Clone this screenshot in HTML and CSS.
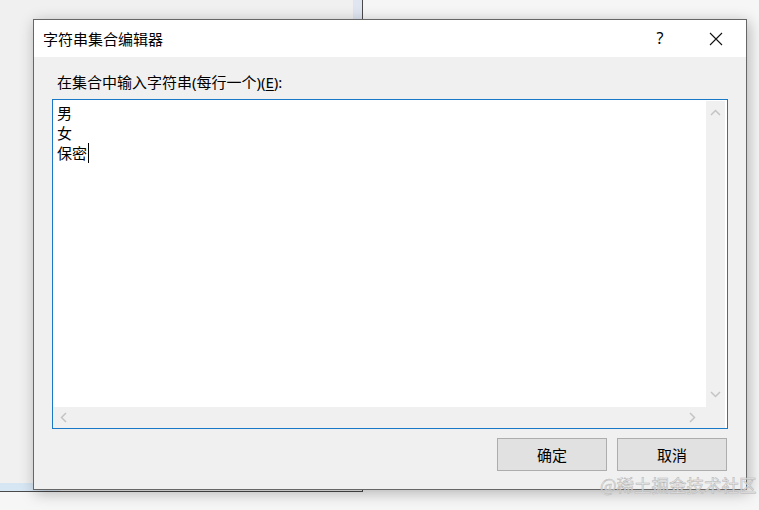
FILE: index.html
```html
<!DOCTYPE html>
<html lang="zh-CN">
<head>
<meta charset="utf-8">
<title>字符串集合编辑器</title>
<link rel="stylesheet" href="styles.css">
</head>
<body>
<div class="desktop">
  <div class="back-window">
    <div class="back-strip-v"></div>
    <div class="back-strip-h"></div>
  </div>

  <div class="dialog">
    <div class="titlebar">
      <span class="title">字符串集合编辑器</span>
      <div class="title-buttons">
        <span class="help">?</span>
        <span class="close">
          <svg width="14" height="14" viewBox="0 0 14 14"><path d="M1 1 L13 13 M13 1 L1 13" stroke="#111" stroke-width="1.1" fill="none"/></svg>
        </span>
      </div>
    </div>
    <div class="dialog-body">
      <div class="label">在集合中输入字符串(每行一个)(<u>E</u>):</div>
      <div class="textbox">
        <div class="text-area">
          <div class="line">男</div>
          <div class="line">女</div>
          <div class="line">保密<span class="caret"></span></div>
        </div>
        <div class="vscroll">
          <svg width="11" height="7" viewBox="0 0 11 7"><path d="M1 6 L5.5 1.5 L10 6" stroke="#c4c4c4" stroke-width="1.5" fill="none"/></svg>
          <svg width="11" height="7" viewBox="0 0 11 7"><path d="M1 1 L5.5 5.5 L10 1" stroke="#c4c4c4" stroke-width="1.5" fill="none"/></svg>
        </div>
        <div class="hscroll">
          <svg width="7" height="11" viewBox="0 0 7 11"><path d="M6 1 L1.5 5.5 L6 10" stroke="#c4c4c4" stroke-width="1.5" fill="none"/></svg>
          <svg width="7" height="11" viewBox="0 0 7 11"><path d="M1 1 L5.5 5.5 L1 10" stroke="#c4c4c4" stroke-width="1.5" fill="none"/></svg>
        </div>
        <div class="corner"></div>
      </div>
      <div class="buttons">
        <button class="btn">确定</button>
        <button class="btn">取消</button>
      </div>
    </div>
  </div>

  <div class="watermark">@稀土掘金技术社区</div>
</div>
</body>
</html>
```

FILE: styles.css
```css
* { box-sizing: border-box; }

html, body {
  margin: 0;
  padding: 0;
  width: 759px;
  height: 510px;
  overflow: hidden;
}

body {
  background: #f6f6f6;
  font-family: "Noto Sans", "Noto Sans CJK SC", sans-serif;
  font-size: 15px;
  color: #000;
}

.desktop {
  position: relative;
  width: 759px;
  height: 510px;
  overflow: hidden;
}

.back-window {
  position: absolute;
  left: 0;
  top: 0;
  width: 363px;
  height: 492px;
  background: #f0f0f0;
  border-right: 1px solid #4a4a4a;
  border-bottom: 1px solid #4a4a4a;
}

.back-strip-v {
  position: absolute;
  right: 0;
  top: 0;
  width: 9px;
  height: 30px;
  background: #dfe5f1;
}

.back-strip-h {
  position: absolute;
  left: 0;
  bottom: 0;
  width: 60px;
  height: 8px;
  background: #d7e6f3;
}

.dialog {
  position: absolute;
  left: 33px;
  top: 19px;
  width: 714px;
  height: 471px;
  border: 1px solid #666;
  background: #f0f0f0;
  display: flex;
  flex-direction: column;
  box-shadow: 2px 3px 14px rgba(0, 0, 0, 0.28);
}

.titlebar {
  height: 37px;
  background: #fff;
  display: flex;
  align-items: center;
  justify-content: space-between;
  padding-left: 9px;
}

.title {
  font-family: "Noto Sans CJK SC", sans-serif;
  font-size: 15px;
  line-height: 20px;
  margin-top: 1px;
}

.title-buttons {
  display: flex;
  align-items: center;
  height: 100%;
}

.help {
  font-family: "Noto Sans", sans-serif;
  font-size: 16px;
  line-height: 20px;
  width: 20px;
  text-align: center;
  margin-right: 39px;
  margin-top: -2px;
}

.close {
  display: flex;
  align-items: center;
  margin-right: 23px;
}

.dialog-body {
  flex: 1;
  display: flex;
  flex-direction: column;
  padding: 15px 17px 0 18px;
}

.label {
  font-family: "Noto Sans", "Noto Sans CJK SC", sans-serif;
  font-size: 15px;
  line-height: 20px;
  padding-left: 5px;
  height: 20px;
  margin-bottom: 7px;
}

.label u {
  text-decoration-thickness: 1px;
  text-underline-offset: 2px;
}

.textbox {
  width: 676px;
  height: 330px;
  border: 1px solid #1a79c6;
  background: #fff;
  display: grid;
  grid-template-columns: 653px 21px;
  grid-template-rows: 307px 21px;
}

.text-area {
  padding: 3px 4px;
  font-family: "Noto Sans CJK SC", sans-serif;
  font-size: 15px;
}

.line {
  height: 20px;
  line-height: 20px;
  display: flex;
  align-items: center;
}

.caret {
  display: inline-block;
  width: 1px;
  height: 20px;
  background: #000;
  margin-left: 1px;
}

.vscroll {
  background: #f0f0f0;
  border-right: 2px solid #fff;
  border-top: 1px solid #fff;
  display: flex;
  flex-direction: column;
  align-items: center;
  justify-content: space-between;
  padding: 8px 0 9px;
}

.hscroll {
  background: #f0f0f0;
  display: flex;
  align-items: center;
  justify-content: space-between;
  padding: 0 10px 0 7px;
}

.corner {
  background: #f0f0f0;
  border-right: 2px solid #fff;
}

.buttons {
  display: flex;
  justify-content: flex-end;
  gap: 10px;
  margin-top: 9px;
  padding-right: 2px;
}

.btn {
  width: 110px;
  height: 33px;
  background: #e1e1e1;
  border: 1px solid #adadad;
  font-family: "Noto Sans CJK SC", sans-serif;
  font-size: 15px;
  line-height: 20px;
  color: #000;
  padding: 0;
}

.watermark {
  position: absolute;
  left: 600px;
  top: 473px;
  font-family: "Noto Sans CJK SC", sans-serif;
  font-size: 17.5px;
  line-height: 24px;
  white-space: nowrap;
  color: rgba(235, 235, 235, 0.75);
  -webkit-text-stroke: 0.5px #b4b4b4;
}
```
